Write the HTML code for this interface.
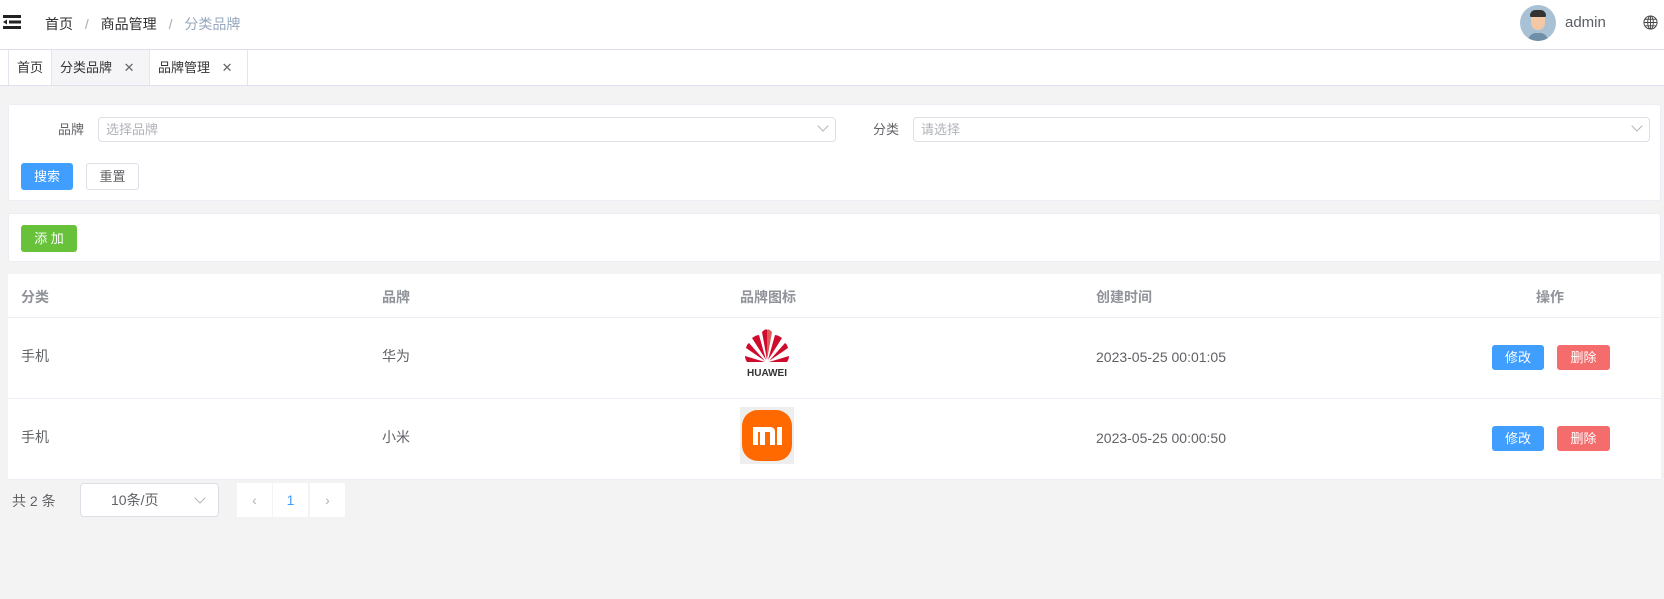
<!DOCTYPE html>
<html><head><meta charset="utf-8"><style>
*{box-sizing:border-box;margin:0;padding:0}
body{width:1664px;height:599px;background:#f3f3f3;font-family:"Liberation Sans","Noto Sans CJK SC",sans-serif;color:#606266;position:relative;overflow:hidden;font-size:14px}
.a{position:absolute}
.hdr{left:0;top:0;width:1664px;height:50px;background:#fff;border-bottom:1px solid #e0dff0}
.tabs{left:0;top:50px;width:1664px;height:36px;background:#fff;border-bottom:1px solid #e0dff0}
.tab{position:absolute;top:0;height:35px;line-height:35px;font-size:13px;color:#333;border-left:1px solid #e4e4ee;border-right:1px solid #e4e4ee;padding:0 8px}
.card{background:#fff;border:1px solid #ebeef5;border-radius:3px}
.inp{border:1px solid #dcdfe6;border-radius:4px;background:#fff;height:25px;font-size:13px;color:#b0b3b8;padding-left:7px;line-height:23px}
.chev{position:absolute;right:8px;top:4px;width:8px;height:8px;border-right:1px solid #b0b3b8;border-bottom:1px solid #b0b3b8;transform:rotate(45deg)}
.btn{position:absolute;border-radius:3px;font-size:13px;text-align:center;color:#fff}
.th{position:absolute;top:13px;font-weight:bold;color:#909399;font-size:14px}
.td{position:absolute;color:#606266;font-size:14px}
.line{position:absolute;left:0;width:100%;height:1px;background:#ebeef5}
</style></head><body>
<div class="a hdr">
  <svg class="a" style="left:3px;top:15px" width="18" height="14" viewBox="0 0 18 14"><rect x="0" y="0" width="18" height="3" fill="#222"/><rect x="6" y="5.5" width="12" height="3" fill="#222"/><rect x="0" y="11" width="18" height="3" fill="#222"/><path d="M0 7 L4 4.5 L4 9.5Z" fill="#222"/></svg>
  <div class="a" style="left:45px;top:14px;font-size:14px;color:#303133">首页 <span style="color:#aaa;margin:0 8px">/</span> 商品管理 <span style="color:#aaa;margin:0 8px">/</span> <span style="color:#97a8be">分类品牌</span></div>
  <div class="a" style="left:1520px;top:5px;width:36px;height:36px;border-radius:50%;background:#a9c1d4;overflow:hidden">
    <div class="a" style="left:11px;top:7px;width:14px;height:18px;background:#f3c9a5;border-radius:6px 6px 7px 7px"></div>
    <div class="a" style="left:10px;top:5px;width:16px;height:7px;background:#333;border-radius:7px 7px 2px 2px"></div>
    <div class="a" style="left:8px;top:28px;width:20px;height:10px;background:#6f8fa8;border-radius:8px 8px 0 0"></div>
  </div>
  <div class="a" style="left:1565px;top:14px;font-size:15px;color:#5a5e66">admin</div>
  <svg class="a" style="left:1643px;top:15px" width="15" height="15" viewBox="0 0 16 16" fill="none" stroke="#444" stroke-width="1"><circle cx="8" cy="8" r="7"/><ellipse cx="8" cy="8" rx="3" ry="7"/><path d="M1 8H15M2 4.5H14M2 11.5H14M8 1V15"/></svg>
</div>
<div class="a tabs">
  <div class="tab" style="left:8px">首页</div>
  <div class="tab" style="left:51px;width:99px;background:#f5f5f8">分类品牌 <span style="margin-left:8px;color:#666">✕</span></div>
  <div class="tab" style="left:149px;width:99px">品牌管理 <span style="margin-left:8px;color:#666">✕</span></div>
</div>
<div class="a card" style="left:8px;top:104px;width:1653px;height:97px">
  <div class="a" style="left:49px;top:14px;font-size:13px;color:#606266">品牌</div>
  <div class="a inp" style="left:89px;top:12px;width:738px">选择品牌<i class="chev"></i></div>
  <div class="a" style="left:864px;top:14px;font-size:13px;color:#606266">分类</div>
  <div class="a inp" style="left:904px;top:12px;width:737px">请选择<i class="chev"></i></div>
  <div class="btn" style="left:12px;top:58px;width:52px;height:27px;line-height:27px;background:#409eff">搜索</div>
  <div class="btn" style="left:77px;top:58px;width:53px;height:27px;line-height:25px;background:#fff;border:1px solid #dcdfe6;color:#606266">重置</div>
</div>
<div class="a card" style="left:8px;top:213px;width:1653px;height:49px">
  <div class="btn" style="left:12px;top:11px;width:56px;height:27px;line-height:27px;background:#67c23a">添 加</div>
</div>
<div class="a" style="left:8px;top:274px;width:1653px;height:206px;background:#fff">
  <div class="th" style="left:13px">分类</div>
  <div class="th" style="left:374px">品牌</div>
  <div class="th" style="left:732px">品牌图标</div>
  <div class="th" style="left:1088px">创建时间</div>
  <div class="th" style="left:1528px">操作</div>
  <div class="line" style="top:43px"></div>
  <div class="td" style="left:13px;top:72px">手机</div>
  <div class="td" style="left:374px;top:72px">华为</div>
  <svg class="a" style="left:732px;top:52px" width="54" height="54" viewBox="0 0 54 54">
    <g fill="#cf0a2c">
      <path d="M27 34 L22 6 Q26 2 27 4Z"/><path d="M27 34 L32 6 Q28 2 27 4Z" fill="#e05a5a"/>
      <path d="M26 34 L12 12 Q16 9 19 9Z"/><path d="M28 34 L42 12 Q38 9 35 9Z"/>
      <path d="M25 35 L6 22 Q7 18 9 17Z"/><path d="M29 35 L48 22 Q47 18 45 17Z"/>
      <path d="M25 36 L5 30 Q5 33 7 36Z"/><path d="M29 36 L49 30 Q49 33 47 36Z"/>
    </g>
    <text x="27" y="50" text-anchor="middle" font-family="Liberation Sans" font-weight="bold" font-size="10" fill="#333">HUAWEI</text>
  </svg>
  <div class="td" style="left:1088px;top:75px">2023-05-25 00:01:05</div>
  <div class="btn" style="left:1484px;top:71px;width:52px;height:25px;line-height:25px;background:#409eff">修改</div>
  <div class="btn" style="left:1549px;top:71px;width:53px;height:25px;line-height:25px;background:#f56c6c">删除</div>
  <div class="line" style="top:124px"></div>
  <div class="td" style="left:13px;top:153px">手机</div>
  <div class="td" style="left:374px;top:153px">小米</div>
  <svg class="a" style="left:732px;top:133px" width="54" height="57" viewBox="0 0 54 57"><rect width="54" height="57" fill="#eeeeee"/><rect x="2" y="3" width="50" height="51" rx="16" fill="#ff6900"/><path d="M13 20 H30 Q35 20 35 25 V38 H30 V25 H25 V38 H20 V25 H18 V38 H13Z M37 20 H42 V38 H37Z" fill="#fff"/></svg>
  <div class="td" style="left:1088px;top:156px">2023-05-25 00:00:50</div>
  <div class="btn" style="left:1484px;top:152px;width:52px;height:25px;line-height:25px;background:#409eff">修改</div>
  <div class="btn" style="left:1549px;top:152px;width:53px;height:25px;line-height:25px;background:#f56c6c">删除</div>
  <div class="line" style="top:205px"></div>
</div>
<div class="a" style="left:12px;top:491px;font-size:14px;color:#606266">共 2 条</div>
<div class="a inp" style="left:80px;top:483px;width:139px;height:34px;line-height:32px;color:#606266;font-size:14px;padding-left:30px">10条/页<i class="chev" style="top:10px;right:14px"></i></div>
<div class="a" style="left:237px;top:483px;width:35px;height:34px;background:#fff;text-align:center;line-height:34px;color:#b0b3b8">‹</div>
<div class="a" style="left:273px;top:483px;width:35px;height:34px;background:#fff;text-align:center;line-height:34px;color:#409eff">1</div>
<div class="a" style="left:310px;top:483px;width:35px;height:34px;background:#fff;text-align:center;line-height:34px;color:#b0b3b8">›</div>
</body></html>
